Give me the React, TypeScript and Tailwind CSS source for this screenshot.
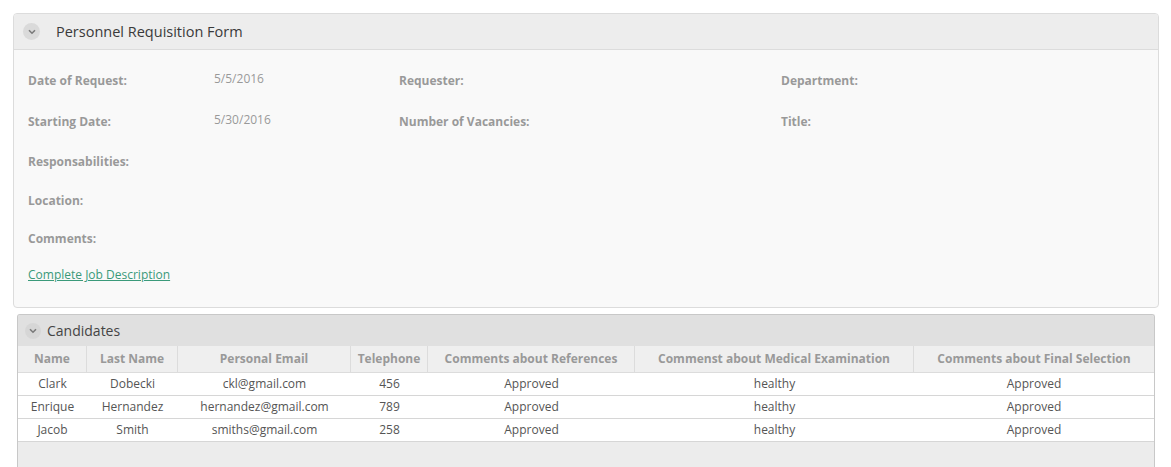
import React from 'react';

const font = { fontFamily: '"Open Sans", "Noto Sans", Arial, sans-serif' };

function Chevron({ className }: { className?: string }) {
  return (
    <span className={`flex items-center justify-center rounded-full ${className}`}>
      <svg width="8" height="6" viewBox="0 0 8 6" fill="none">
        <path d="M1 1.2 L4 4.2 L7 1.2" stroke="#7a7a7a" strokeWidth="1.6" />
      </svg>
    </span>
  );
}

const candidates = [
  { name: 'Clark', last: 'Dobecki', email: 'ckl@gmail.com', tel: '456', refs: 'Approved', med: 'healthy', final: 'Approved' },
  { name: 'Enrique', last: 'Hernandez', email: 'hernandez@gmail.com', tel: '789', refs: 'Approved', med: 'healthy', final: 'Approved' },
  { name: 'Jacob', last: 'Smith', email: 'smiths@gmail.com', tel: '258', refs: 'Approved', med: 'healthy', final: 'Approved' },
];

const columns = [
  { title: 'Name', w: 'w-[69px]' },
  { title: 'Last Name', w: 'w-[91px]' },
  { title: 'Personal Email', w: 'w-[173px]' },
  { title: 'Telephone', w: 'w-[77px]' },
  { title: 'Comments about References', w: 'w-[207px]' },
  { title: 'Commenst about Medical Examination', w: 'w-[279px]' },
  { title: 'Comments about Final Selection', w: 'flex-1' },
];

function Label({ children }: { children: React.ReactNode }) {
  return <span className="text-[12px] font-bold text-[#999]">{children}</span>;
}

function Value({ children }: { children: React.ReactNode }) {
  return <span className="text-[12px] text-[#999]">{children}</span>;
}

export default function App() {
  return (
    <div className="h-[467px] w-[1171px] overflow-hidden bg-white" style={font}>
      <div className="pt-[13px] pl-[13px] pr-[12px]">
        {/* Form panel */}
        <div className="overflow-hidden rounded-[4px] border border-[#dcdcdc] bg-[#f9f9f9]">
          <div className="flex h-[36px] items-center border-b border-[#dcdcdc] bg-[#ededed] pl-[9px]">
            <Chevron className="h-[17px] w-[17px] bg-[#dadada]" />
            <span className="ml-[16px] text-[14.5px] text-[#3a3a3a]">Personnel Requisition Form</span>
          </div>
          <div className="pt-[8px] pb-[15px] pl-[14px]">
            <div className="flex h-[41px] items-center">
              <div className="w-[186px]"><Label>Date of Request:</Label></div>
              <div className="flex w-[185px]"><Value>5/5/2016</Value></div>
              <div className="w-[382px]"><Label>Requester:</Label></div>
              <div><Label>Department:</Label></div>
            </div>
            <div className="flex h-[41px] items-center">
              <div className="w-[186px]"><Label>Starting Date:</Label></div>
              <div className="flex w-[185px]"><Value>5/30/2016</Value></div>
              <div className="w-[382px]"><Label>Number of Vacancies:</Label></div>
              <div><Label>Title:</Label></div>
            </div>
            <div className="flex h-[43px] items-center">
              <Label>Responsabilities:</Label>
            </div>
            <div className="flex h-[36px] items-center">
              <Label>Location:</Label>
            </div>
            <div className="flex h-[39px] items-center">
              <Label>Comments:</Label>
            </div>
            <div className="flex h-[34px] items-center">
              <a href="#" className="text-[12px] text-[#3a9a7a] underline">
                Complete Job Description
              </a>
            </div>
          </div>
        </div>

        {/* Candidates panel */}
        <div className="mt-[6px] mx-[4px] overflow-hidden rounded-t-[3px] border border-b-0 border-[#c8c8c8] bg-[#ececec]">
          <div className="flex h-[31px] items-center bg-[#e0e0e0] pl-[7px]">
            <Chevron className="h-[16px] w-[16px] bg-[#d6d6d6]" />
            <span className="ml-[6px] text-[14px] text-[#444]">Candidates</span>
          </div>
          <div className="flex h-[27px] border-b border-[#dcdcdc] bg-[#efefef]">
            {columns.map((c, i) => (
              <div
                key={c.title}
                className={`${c.w} flex items-center justify-center text-[12px] font-bold text-[#999] ${
                  i < columns.length - 1 ? 'border-r border-[#dcdcdc]' : ''
                }`}
              >
                {c.title}
              </div>
            ))}
          </div>
          {candidates.map((r) => (
            <div key={r.email} className="flex h-[23px] border-b border-[#d6d6d6] bg-white text-[12px] text-[#555]">
              {[r.name, r.last, r.email, r.tel, r.refs, r.med, r.final].map((v, i) => (
                <div key={i} className={`${columns[i].w} flex items-center justify-center`}>
                  {v}
                </div>
              ))}
            </div>
          ))}
          <div className="h-[40px]" />
        </div>
      </div>
    </div>
  );
}
